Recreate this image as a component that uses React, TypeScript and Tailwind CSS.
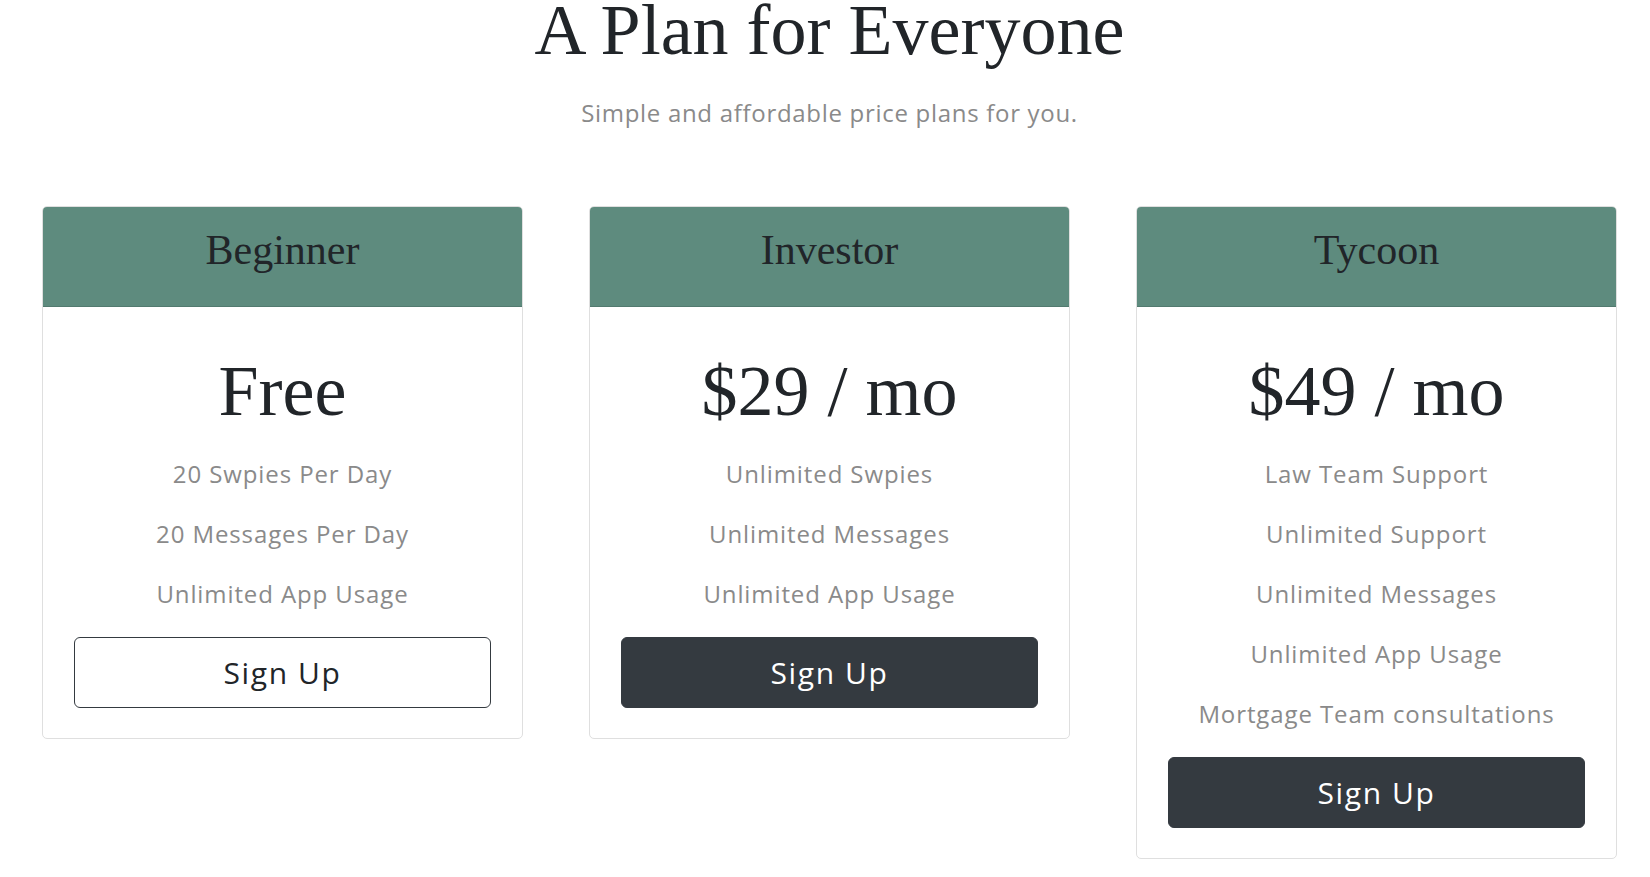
import React from "react";

type Plan = {
  name: string;
  price: string;
  features: string[];
  dark: boolean;
};

const plans: Plan[] = [
  {
    name: "Beginner",
    price: "Free",
    features: ["20 Swpies Per Day", "20 Messages Per Day", "Unlimited App Usage"],
    dark: false,
  },
  {
    name: "Investor",
    price: "$29 / mo",
    features: ["Unlimited Swpies", "Unlimited Messages", "Unlimited App Usage"],
    dark: true,
  },
  {
    name: "Tycoon",
    price: "$49 / mo",
    features: [
      "Law Team Support",
      "Unlimited Support",
      "Unlimited Messages",
      "Unlimited App Usage",
      "Mortgage Team consultations",
    ],
    dark: true,
  },
];

function PlanCard({ plan }: { plan: Plan }) {
  return (
    <div className="w-[481px] shrink-0 border border-[#dfdfdf] rounded-[5px] overflow-hidden bg-white">
      <div className="h-[100px] bg-[#5e8b7e] border-b border-[#527a6f] pt-[18px] text-center">
        <h2 className="font-['Liberation_Serif',serif] text-[42px] leading-[50px] text-[#212529]">
          {plan.name}
        </h2>
      </div>
      <div className="px-[31px] pt-[41px] pb-[30px] flex flex-col items-stretch text-center">
        <div className="font-['Liberation_Serif',serif] text-[72px] leading-[86px] text-[#212529]">
          {plan.price}
        </div>
        <ul className="flex flex-col gap-[24px] mt-[22px]">
          {plan.features.map((f) => (
            <li
              key={f}
              className="font-['Open_Sans',sans-serif] text-[24px] leading-[36px] tracking-[0.9px] text-[#8a8a8a]"
            >
              {f}
            </li>
          ))}
        </ul>
        <button
          className={
            plan.dark
              ? "mt-[25px] h-[71px] rounded-[6px] bg-[#343a40] border border-[#343a40] text-white font-['Open_Sans',sans-serif] text-[30px] tracking-[1.6px]"
              : "mt-[25px] h-[71px] rounded-[6px] bg-white border border-[#343a40] text-[#212529] font-['Open_Sans',sans-serif] text-[30px] tracking-[1.6px]"
          }
        >
          Sign Up
        </button>
      </div>
    </div>
  );
}

export default function App() {
  return (
    <div className="w-[1650px] h-[877px] bg-white overflow-hidden">
      <div className="text-center pl-[9px]">
        <h1 className="font-['Liberation_Serif',serif] text-[72px] leading-[60px] text-[#212529]">
          A Plan for Everyone
        </h1>
        <p className="mt-[35px] font-['Open_Sans',sans-serif] text-[24px] leading-[36px] tracking-[0.7px] text-[#8a8a8a]">
          Simple and affordable price plans for you.
        </p>
      </div>
      <div className="mt-[75px] pl-[42px] flex items-start gap-[66px]">
        {plans.map((p) => (
          <PlanCard key={p.name} plan={p} />
        ))}
      </div>
    </div>
  );
}
